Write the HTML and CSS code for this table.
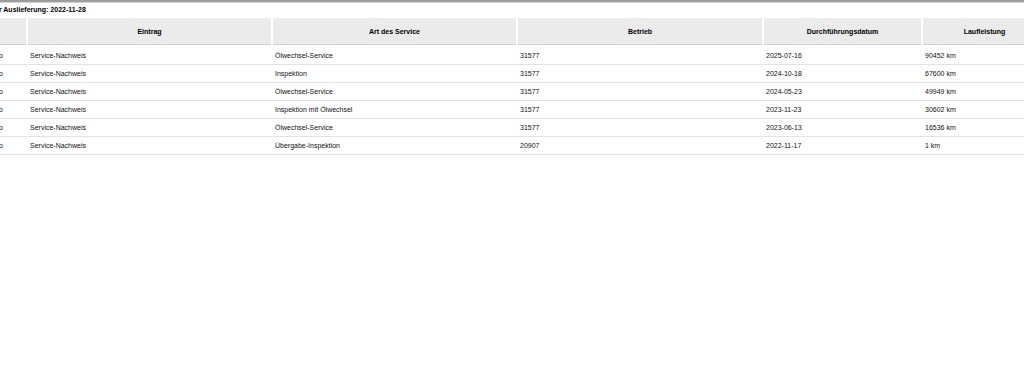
FILE: index.html
```html
<!DOCTYPE html>
<html lang="de">
<head>
<meta charset="utf-8">
<title>Service-Historie</title>
<link rel="stylesheet" href="styles.css">
</head>
<body>
<div class="page">
  <div class="title">Datum der Auslieferung: 2022-11-28</div>
  <table class="history">
    <colgroup>
      <col class="c0"><col class="c1"><col class="c2"><col class="c3"><col class="c4"><col class="c5">
    </colgroup>
    <thead>
      <tr>
        <th></th>
        <th>Eintrag</th>
        <th>Art des Service</th>
        <th>Betrieb</th>
        <th>Durchführungsdatum</th>
        <th>Laufleistung</th>
      </tr>
    </thead>
    <tbody>
      <tr><td class="info">Info</td><td>Service-Nachweis</td><td>Ölwechsel-Service</td><td>31577</td><td>2025-07-16</td><td>90452 km</td></tr>
      <tr><td class="info">Info</td><td>Service-Nachweis</td><td>Inspektion</td><td>31577</td><td>2024-10-18</td><td>67600 km</td></tr>
      <tr><td class="info">Info</td><td>Service-Nachweis</td><td>Ölwechsel-Service</td><td>31577</td><td>2024-05-23</td><td>49949 km</td></tr>
      <tr><td class="info">Info</td><td>Service-Nachweis</td><td>Inspektion mit Ölwechsel</td><td>31577</td><td>2023-11-23</td><td>30602 km</td></tr>
      <tr><td class="info">Info</td><td>Service-Nachweis</td><td>Ölwechsel-Service</td><td>31577</td><td>2023-06-13</td><td>16536 km</td></tr>
      <tr><td class="info">Info</td><td>Service-Nachweis</td><td>Übergabe-Inspektion</td><td>20907</td><td>2022-11-17</td><td>1 km</td></tr>
    </tbody>
  </table>
</div>
</body>
</html>
```

FILE: styles.css
```css
html, body {
  margin: 0;
  padding: 0;
  background: #ffffff;
  overflow: hidden;
}

body {
  font-family: "Liberation Sans", Arial, sans-serif;
  font-size: 7px;
  color: #111111;
  border-top: 2px solid #9c9c9c;
  box-shadow: inset 0 1px 0 #d4d4d4;
}

.page {
  width: 1079px;
  margin-left: -33px;
}

.title {
  font-weight: bold;
  color: #000000;
  height: 15px;
  line-height: 14px;
  padding-top: 1px;
}

.history {
  width: 1079px;
  table-layout: fixed;
  border-collapse: collapse;
  border-spacing: 0;
}

.c0 { width: 60px; }
.c1 { width: 245px; }
.c2 { width: 245px; }
.c3 { width: 246px; }
.c4 { width: 159px; }
.c5 { width: 124px; }

.history th {
  height: 26px;
  padding: 0;
  background: #ebebeb;
  border-left: 2px solid #ffffff;
  border-bottom: 1px solid #d2d2d2;
  font-weight: bold;
  color: #000000;
  text-align: center;
  vertical-align: middle;
}

.history th:first-child {
  border-left: 0;
}

.history tbody tr:first-child td {
  height: 17px;
  padding-top: 2px;
}

.history td {
  height: 17px;
  padding: 0 0 0 3px;
  border-bottom: 1px solid #e3e3e3;
  white-space: nowrap;
  vertical-align: middle;
}

.history td.info {
  padding: 0;
  text-align: center;
}
```
